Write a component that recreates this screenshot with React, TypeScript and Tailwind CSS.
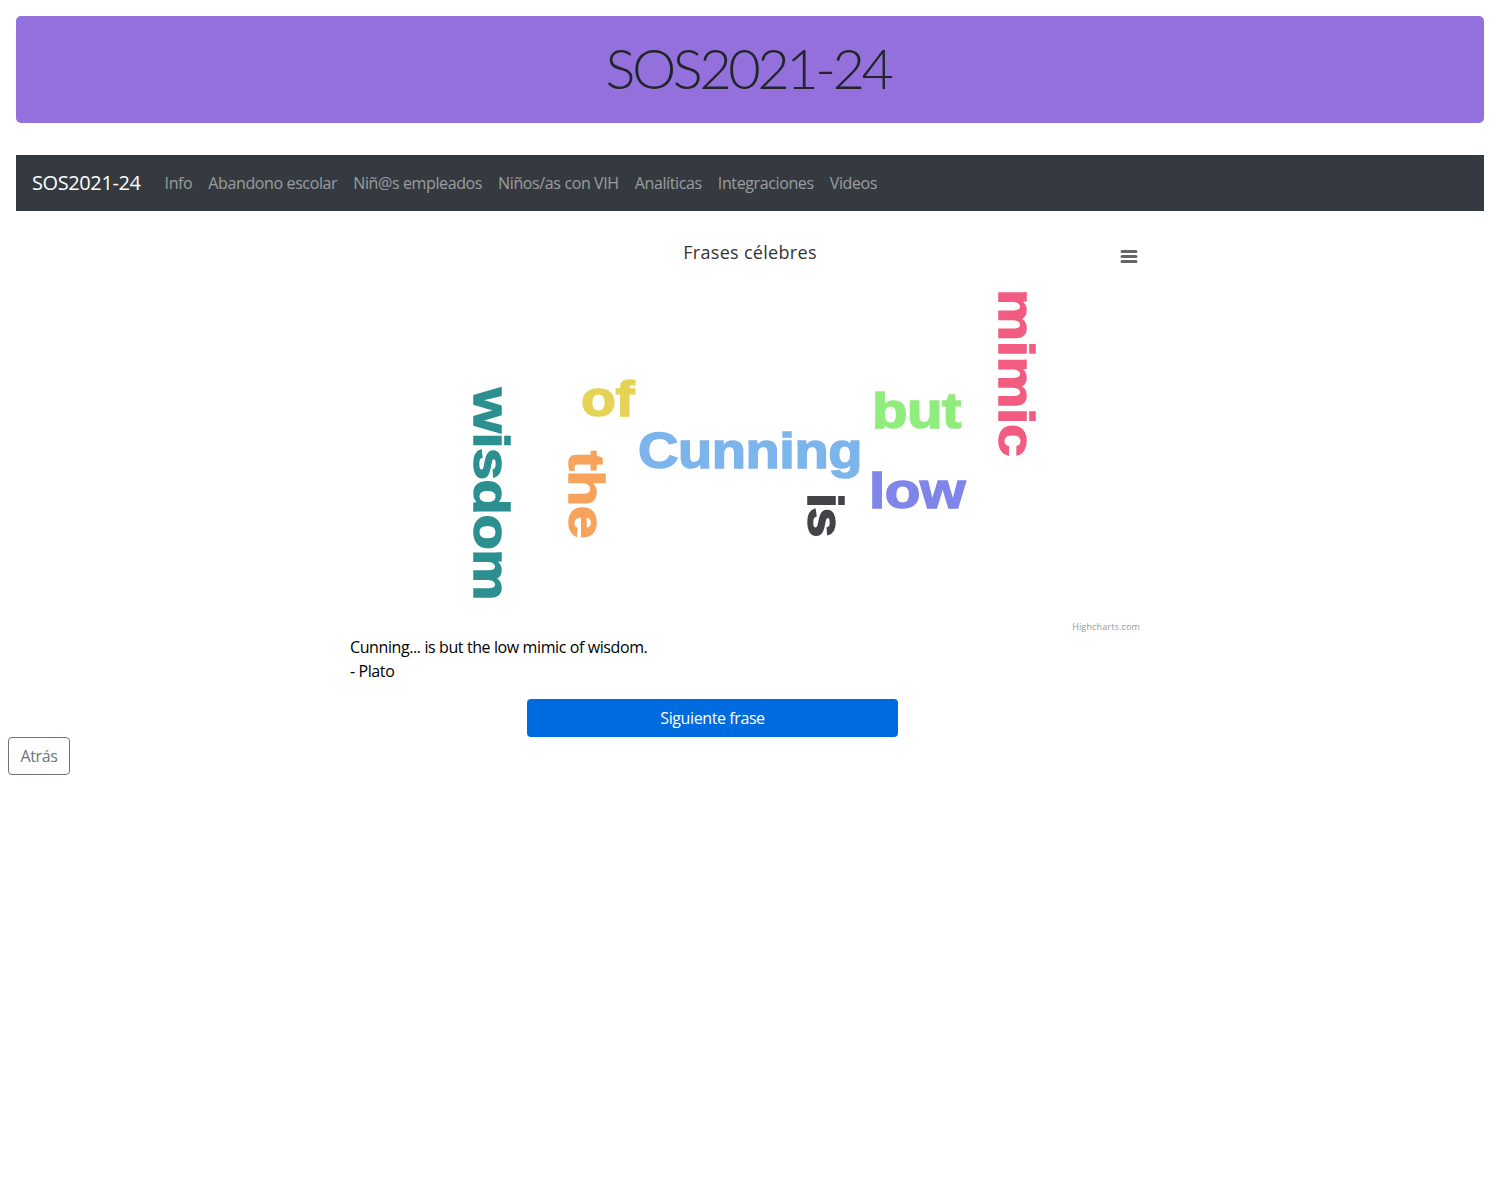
import React from 'react';

const font = { fontFamily: '"Open Sans", "Noto Sans", sans-serif', letterSpacing: '-0.4px' };

const links = [
  'Info',
  'Abandono escolar',
  'Niñ@s empleados',
  'Niños/as con VIH',
  'Analíticas',
  'Integraciones',
  'Videos',
];

const words = [
  { text: 'Cunning', x: 638, y: 468, len: 224, color: '#7cb5ec' },
  { text: 'of', x: 581, y: 416, len: 53, color: '#e4d354' },
  { text: 'but', x: 872, y: 428, len: 89, color: '#90ed7d' },
  { text: 'low', x: 869, y: 508, len: 96, color: '#8085e9' },
  { text: 'is', x: 808, y: 493, len: 44, color: '#434348', rotate: true },
  { text: 'the', x: 569, y: 451, len: 87, color: '#f7a35c', rotate: true },
  { text: 'mimic', x: 999, y: 289, len: 167, color: '#f15c80', rotate: true },
  { text: 'wisdom', x: 474, y: 388, len: 212, color: '#2b908f', rotate: true },
];

const WordCloud = () => (
  <svg width="800" height="400" viewBox="350 235 800 400" className="block">
    <text
      x="750"
      y="259"
      textAnchor="middle"
      fontSize="18"
      fill="#333333"
      style={{ fontFamily: '"Open Sans", sans-serif', letterSpacing: '0.3px' }}>
      Frases célebres
    </text>
    <path d="M1122 251.5H1136M1122 256.5H1136M1122 261.5H1136" stroke="#666666" strokeWidth="3" strokeLinecap="round" />
    {words.map((w) => (
      <text
        key={w.text}
        x={w.x}
        y={w.y}
        fontSize="50.5"
        fontWeight="700"
        fill={w.color}
        stroke={w.color}
        strokeWidth="1.5"
        textLength={w.len}
        lengthAdjust="spacingAndGlyphs"
        transform={w.rotate ? `rotate(90 ${w.x} ${w.y})` : undefined}
        style={{ fontFamily: '"Liberation Sans", Arial, sans-serif' }}>
        {w.text}
      </text>
    ))}
    <text
      x="1140"
      y="630"
      textAnchor="end"
      fontSize="9"
      fill="#999999"
      style={{ fontFamily: '"Open Sans", sans-serif', letterSpacing: '0.15px' }}>
      Highcharts.com
    </text>
  </svg>
);

export default function App() {
  return (
    <div className="min-h-[1200px] bg-white text-base text-[#212529]" style={font}>
      <div className="mx-4 mt-4 flex h-[107px] items-center justify-center rounded-[5px] bg-[#9370db] pb-1">
        <h1 className="mr-1 text-[56px] font-light leading-[1.2] tracking-[-3.5px] text-[#212529] font-['Lato']">SOS2021-24</h1>
      </div>
      <nav className="mx-4 mt-8 flex h-14 items-center bg-[#343a40] px-4">
        <a className="mr-4 text-[20px] text-white">SOS2021-24</a>
        {links.map((link) => (
          <a key={link} className="px-2 text-base tracking-[-0.38px] text-[#ffffff80]">
            {link}
          </a>
        ))}
      </nav>
      <div className="mx-auto mt-6 w-[800px]">
        <WordCloud />
        <p className="leading-6 text-black">Cunning... is but the low mimic of wisdom.</p>
        <p className="leading-6 text-black">- Plato</p>
        <button className="mt-4 ml-[177px] block h-[38px] w-[371px] rounded bg-[#006bdf] text-white">
          Siguiente frase
        </button>
      </div>
      <button className="ml-2 block h-[38px] w-[62px] rounded border border-[#6c757d] text-[#6c757d]">
        Atrás
      </button>
    </div>
  );
}
